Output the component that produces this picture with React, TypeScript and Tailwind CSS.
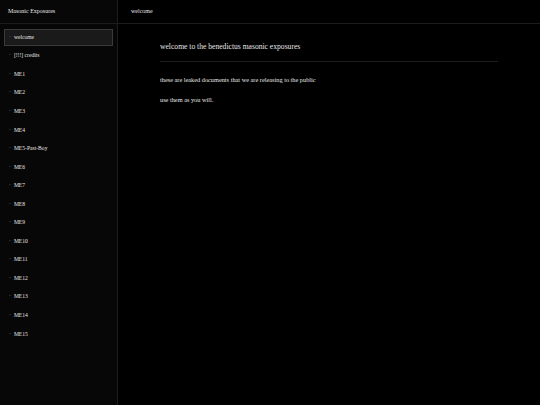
const items = [
  "welcome",
  "[!!!] credits",
  "ME1",
  "ME2",
  "ME3",
  "ME4",
  "ME5-Past-Boy",
  "ME6",
  "ME7",
  "ME8",
  "ME9",
  "ME10",
  "ME11",
  "ME12",
  "ME13",
  "ME14",
  "ME15",
];

export default function App() {
  return (
    <div
      className="flex h-[405px] w-[540px] overflow-hidden bg-black text-[#e6e6e6]"
      style={{ fontFamily: '"Liberation Serif", "Times New Roman", serif' }}
    >
      <aside className="flex w-[118px] shrink-0 flex-col border-r border-[#1c1c1c] bg-[#070707]">
        <div className="flex h-[24px] items-center border-b border-[#1c1c1c] px-[8px] text-[6px]">
          Masonic Exposures
        </div>
        <nav className="flex flex-col gap-[1.55px] px-[4px] pt-[4.5px]">
          {items.map((item, i) => (
            <div
              key={item}
              className={
                i === 0
                  ? "flex h-[17px] items-center gap-[3px] border border-[#3a3a3a] bg-[#1a1a1a] px-[4px] text-[5.6px]"
                  : "flex h-[17px] items-center gap-[3px] border border-transparent px-[4px] text-[5.6px]"
              }
            >
              <span className="text-[#9a9a9a]">·</span>
              <span>{item}</span>
            </div>
          ))}
        </nav>
      </aside>
      <main className="flex flex-1 flex-col">
        <header className="flex h-[24px] items-center border-b border-[#1c1c1c] px-[13px] text-[6px]">
          welcome
        </header>
        <section className="px-[42px] pt-[18px]">
          <h1 className="border-b border-[#1e1e1e] pb-[9px] text-[7.6px] leading-[10px]">
            welcome to the benedictus masonic exposures
          </h1>
          <p className="mt-[12.5px] text-[6.3px] leading-[10px]">
            these are leaked documents that we are releasing to the public
          </p>
          <p className="mt-[10px] text-[6.3px] leading-[10px]">use them as you will.</p>
        </section>
      </main>
    </div>
  );
}
